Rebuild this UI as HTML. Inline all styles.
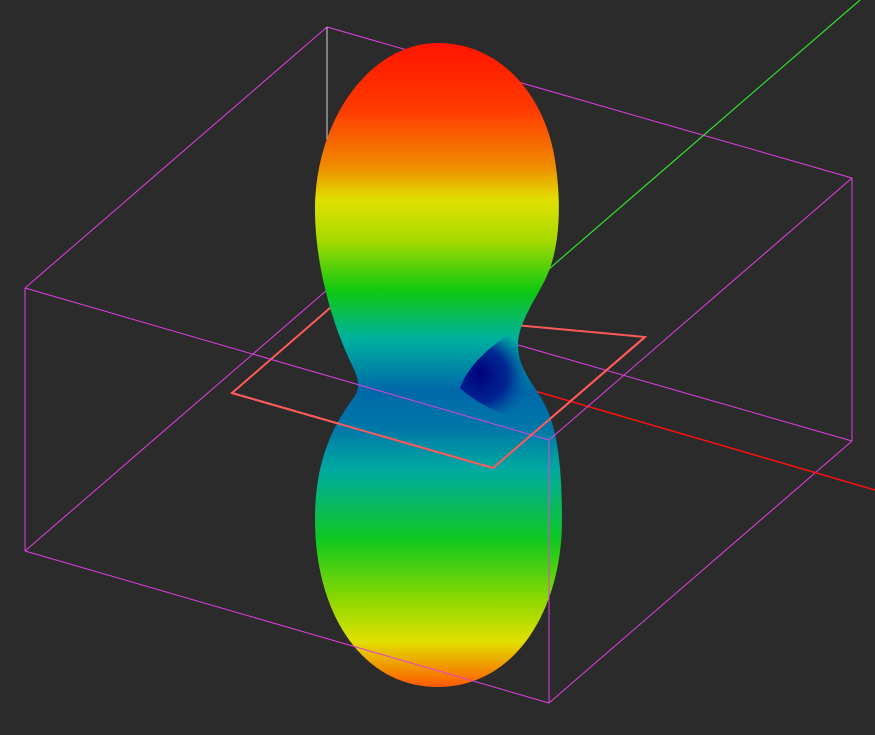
<!DOCTYPE html>
<html><head><meta charset="utf-8"><style>
html,body{margin:0;padding:0;background:#2b2b2b;}
svg{display:block;}
</style></head><body>
<svg width="875" height="735" viewBox="0 0 875 735" xmlns="http://www.w3.org/2000/svg">
<defs>
<linearGradient id="g" x1="0" y1="43" x2="0" y2="687" gradientUnits="userSpaceOnUse">
<stop offset="0" stop-color="#ff1500"/>
<stop offset="0.104" stop-color="#ff3a00"/>
<stop offset="0.19" stop-color="#f08a00"/>
<stop offset="0.244" stop-color="#e0e000"/>
<stop offset="0.306" stop-color="#a8da00"/>
<stop offset="0.384" stop-color="#10c810"/>
<stop offset="0.46" stop-color="#00b0a0"/>
<stop offset="0.54" stop-color="#0068a8"/>
<stop offset="0.6" stop-color="#0078a8"/>
<stop offset="0.663" stop-color="#00aaa0"/>
<stop offset="0.772" stop-color="#10c820"/>
<stop offset="0.866" stop-color="#90d800"/>
<stop offset="0.929" stop-color="#e0e000"/>
<stop offset="1" stop-color="#ff5a00"/>
</linearGradient>
<radialGradient id="b" cx="480" cy="375" r="50" gradientUnits="userSpaceOnUse">
<stop offset="0" stop-color="#00007a"/>
<stop offset="0.55" stop-color="#001890" stop-opacity="0.85"/>
<stop offset="1" stop-color="#0050a0" stop-opacity="0"/>
</radialGradient>
</defs>
<g stroke="#e040e0" stroke-width="1" fill="none">
<line x1="327" y1="27" x2="852" y2="178"/>
<line x1="327" y1="27" x2="25" y2="288"/>
<line x1="327" y1="27" x2="327" y2="290" stroke="#d0d0d0"/>
<line x1="327" y1="290" x2="852" y2="441"/>
<line x1="327" y1="290" x2="25" y2="551"/>
<line x1="852" y1="178" x2="852" y2="441"/>
<line x1="852" y1="441" x2="549" y2="703"/>
<line x1="25" y1="288" x2="25" y2="551"/>
</g>
<line x1="860" y1="0" x2="490" y2="320" stroke="#30e030" stroke-width="1.2"/>
<line x1="480" y1="375" x2="875" y2="490" stroke="#ff1010" stroke-width="1.5"/>
<polygon points="232,393 330,308 645,337 493,468" fill="none" stroke="#ff5a5a" stroke-width="2"/>
<path d="M438,43 C500,43 545,95 555,160 C562,205 560,250 545,280 C532,305 518,325 518,345 C518,370 535,385 545,405 C558,430 562,470 562,520 C562,610 515,687 438,687 C360,687 315,610 315,520 C315,465 330,430 352,400 C362,388 358,378 352,365 C330,320 315,260 315,210 C315,120 370,43 438,43 Z" fill="url(#g)"/>
<path d="M520,330 C495,340 468,365 460,388 C475,402 505,420 540,420 C530,390 515,360 520,330Z" fill="url(#b)"/>
<g stroke="#e040e0" stroke-width="1" fill="none">
<line x1="25" y1="288" x2="549" y2="440"/>
<line x1="549" y1="440" x2="852" y2="178"/>
<line x1="549" y1="440" x2="549" y2="703"/>
<line x1="25" y1="551" x2="549" y2="703"/>
</g>
<polyline points="232,393 493,468 645,337" fill="none" stroke="#ff5a5a" stroke-width="2"/>
</svg>
</body></html>
